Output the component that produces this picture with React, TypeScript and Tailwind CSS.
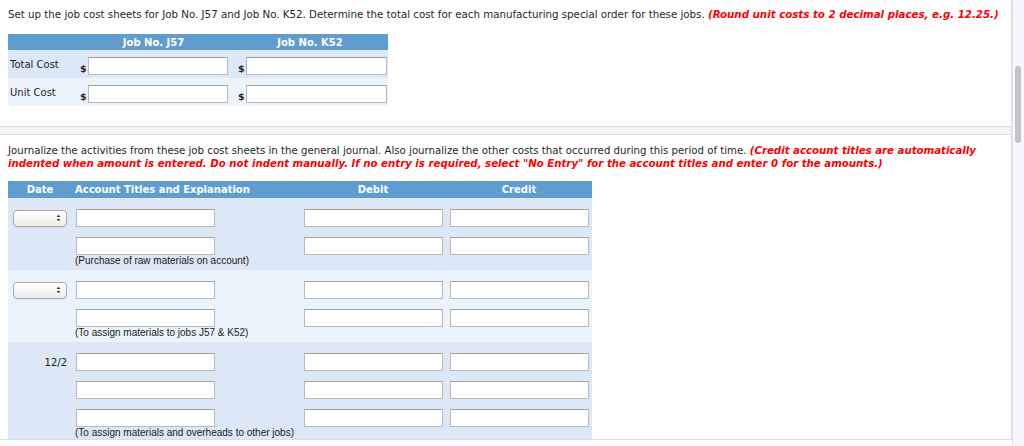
import React from "react";

const font = { fontFamily: '"DejaVu Sans", Verdana, sans-serif' };

function Box({ w = "w-[139px]" }: { w?: string }) {
  return (
    <input
      type="text"
      className={`${w} h-[18px] bg-white border border-[#b9b9b9] border-t-[#a3a3a3] outline-none`}
    />
  );
}

function DateSelect() {
  return (
    <div className="w-[54px] h-[17px] rounded-[4px] border border-[#a8a8a8] bg-gradient-to-b from-white to-[#ececec] flex items-center justify-end pr-[5px] shadow-[0_1px_0_rgba(0,0,0,0.05)]">
      <svg width="5" height="8" viewBox="0 0 5 8">
        <path d="M0.5 3 L2.5 0.8 L4.5 3 Z" fill="#444" />
        <path d="M0.5 5 L2.5 7.2 L4.5 5 Z" fill="#444" />
      </svg>
    </div>
  );
}

function Line({ date, select }: { date?: string; select?: boolean }) {
  return (
    <div className="grid grid-cols-[64px_228px_146px_146px] h-[18px] items-center">
      <div className="flex justify-end pr-[5px]">
        {select && <DateSelect />}
        {date && <span className="text-[10px] text-[#222] self-start pt-[1px]">{date}</span>}
      </div>
      <div className="pl-[4px]">
        <Box />
      </div>
      <div className="pl-[4px]">
        <Box />
      </div>
      <div className="pl-[4px]">
        <Box />
      </div>
    </div>
  );
}

function Group({
  bg,
  lines,
  note,
  date,
}: {
  bg: string;
  lines: number;
  note: string;
  date?: string;
}) {
  return (
    <div className={`${bg} pt-[8px] pb-[2px] flex flex-col gap-[10px]`}>
      {Array.from({ length: lines }).map((_, i) => (
        <Line key={i} select={i === 0 && !date} date={i === 0 ? date : undefined} />
      ))}
      <div
        className="pl-[67px] text-[10px] text-[#1a1a1a] h-[14px] -mt-[8px] leading-[14px]"
        style={{ fontFamily: '"Liberation Sans", Tahoma, sans-serif' }}
      >
        {note}
      </div>
    </div>
  );
}

export default function App() {
  return (
    <div className="w-[1024px] h-[446px] bg-white flex overflow-hidden text-[#1f1f1f]" style={font}>
      <div className="w-[1012px] flex flex-col">
        {/* job cost sheets */}
        <div className="h-[127px] border-r border-b border-[#d6dde8] bg-white pl-[8px] pt-[8px]">
          <p className="text-[10.25px] leading-[13px]">
            Set up the job cost sheets for Job No. J57 and Job No. K52. Determine the total cost for each
            manufacturing special order for these jobs.{" "}
            <span className="text-[#ff0000] font-bold italic">
              (Round unit costs to 2 decimal places, e.g. 12.25.)
            </span>
          </p>
          <div className="mt-[13px] w-[380px]">
            <div className="grid grid-cols-[67px_157px_156px] h-[16px] bg-[#5f9dd1] text-white font-bold text-[10px] items-center">
              <div />
              <div className="text-center">Job No. J57</div>
              <div className="text-center">Job No. K52</div>
            </div>
            {["Total Cost", "Unit Cost"].map((label, i) => (
              <div
                key={label}
                className={`grid grid-cols-[67px_157px_156px] h-[28px] ${i === 0 ? "bg-[#dce8f7]" : "bg-[#ebf3fd]"}`}
              >
                <div className="pl-[2px] pt-[7px] text-[10px]">{label}</div>
                <div className="flex items-end pb-[3px] pl-[5px] gap-[1px]">
                  <span className="text-[9.5px] font-bold leading-[12px]">$</span>
                  <Box w="w-[140px]" />
                </div>
                <div className="flex items-end pb-[3px] pl-[6px] gap-[1px]">
                  <span className="text-[9.5px] font-bold leading-[12px]">$</span>
                  <Box w="w-[141px]" />
                </div>
              </div>
            ))}
          </div>
        </div>

        <div className="h-[7px] bg-[#f3f5f9] border-r border-[#d6dde8]" />

        {/* journal */}
        <div className="flex-1 border-t border-r border-b border-[#d6dde8] bg-white pl-[8px] pt-[9px] overflow-hidden">
          <p className="text-[10.2px] leading-[13px] pr-[20px]">
            Journalize the activities from these job cost sheets in the general journal. Also journalize the
            other costs that occurred during this period of time.{" "}
            <span className="text-[#ff0000] font-bold italic">
              (Credit account titles are automatically indented when amount is entered. Do not indent
              manually. If no entry is required, select "No Entry" for the account titles and enter 0 for the
              amounts.)
            </span>
          </p>
          <div className="mt-[11px] w-[584px]">
            <div className="grid grid-cols-[64px_228px_146px_146px] h-[17px] bg-[#5f9dd1] text-white font-bold text-[10px] items-center">
              <div className="text-center">Date</div>
              <div className="pl-[3px]">Account Titles and Explanation</div>
              <div className="text-center">Debit</div>
              <div className="text-center">Credit</div>
            </div>
            <Group bg="bg-[#dce8f7]" lines={2} note="(Purchase of raw materials on account)" />
            <Group bg="bg-[#ebf3fd]" lines={2} note="(To assign materials to jobs J57 & K52)" />
            <Group bg="bg-[#dce8f7]" lines={3} note="(To assign materials and overheads to other jobs)" date="12/2" />
          </div>
        </div>
        <div className="h-[6px] bg-[#fbfcfd]" />
      </div>

      {/* scrollbar */}
      <div className="w-[12px] bg-[#f6f7f9] border-l border-[#e3e6eb] pt-[66px] pl-[2px]">
        <div className="w-[6px] h-[77px] rounded-[3px] bg-[#c2c4c8]" />
      </div>
    </div>
  );
}
